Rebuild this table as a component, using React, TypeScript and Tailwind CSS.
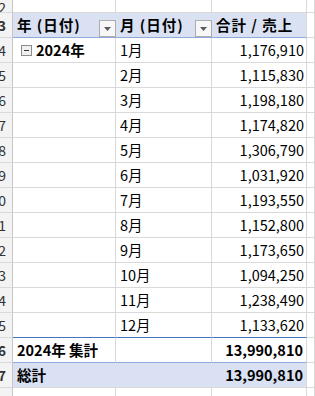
const MONTHS = [
  { n: 4, m: "1月", v: "1,176,910" },
  { n: 5, m: "2月", v: "1,115,830" },
  { n: 6, m: "3月", v: "1,198,180" },
  { n: 7, m: "4月", v: "1,174,820" },
  { n: 8, m: "5月", v: "1,306,790" },
  { n: 9, m: "6月", v: "1,031,920" },
  { n: 10, m: "7月", v: "1,193,550" },
  { n: 11, m: "8月", v: "1,152,800" },
  { n: 12, m: "9月", v: "1,173,650" },
  { n: 13, m: "10月", v: "1,094,250" },
  { n: 14, m: "11月", v: "1,238,490" },
  { n: 15, m: "12月", v: "1,133,620" },
];

function RowHead({ n }: { n: number }) {
  return (
    <div className="h-[25px] w-[13px] shrink-0 overflow-hidden bg-[#f3f3f3] border-r border-b border-r-[#c6c6c6] border-b-[#dadada] flex items-center justify-end pr-[6px] text-[14px] text-[#333] leading-none">
      {String(n).slice(-1)}
    </div>
  );
}

function DropBtn() {
  return (
    <div className="w-[17px] h-[17px] border border-[#acacac] bg-[#f7f7f7] flex items-center justify-center self-end">
      <svg width="7" height="4" viewBox="0 0 7 4">
        <path d="M0 0H7L3.5 4Z" fill="#5a5a5a" />
      </svg>
    </div>
  );
}

function MinusBox() {
  return (
    <div className="w-[11px] h-[11px] border border-[#8c8c8c] bg-[#f0f0f0] flex items-center justify-center mr-[4px]">
      <div className="w-[5px] h-[1px] bg-[#333]" />
    </div>
  );
}

export default function App() {
  const grid = "border-r border-b border-[#d9d9d9]";
  return (
    <div className="w-[315px] h-[396px] overflow-hidden bg-white font-['Noto_Sans_CJK_JP','Noto_Sans',sans-serif] text-[14.5px] text-black">
      {/* row 2 (partial) */}
      <div className="flex">
        <div className="h-[13px] w-[13px] shrink-0 overflow-hidden bg-[#f3f3f3] border-r border-b border-r-[#c6c6c6] border-b-[#dadada] flex items-end justify-end pr-[6px] text-[14px] text-[#333] leading-[10px]">
          2
        </div>
        <div className={`h-[13px] w-[103px] ${grid}`} />
        <div className={`h-[13px] w-[96px] ${grid}`} />
        <div className={`h-[13px] w-[95px] ${grid}`} />
        <div className={`h-[13px] flex-1 ${grid}`} />
      </div>

      {/* row 3 header */}
      <div className="flex font-bold">
        <RowHead n={3} />
        <div className="h-[25px] w-[103px] bg-[#d9e1f2] border-b border-[#8ea9db] flex items-center pl-[4px]">
          <span className="flex-1 tracking-[1px]">年 (日付)</span>
          <DropBtn />
        </div>
        <div className="h-[25px] w-[96px] bg-[#d9e1f2] border-b border-[#8ea9db] flex items-center pl-[4px]">
          <span className="flex-1 tracking-[1px]">月 (日付)</span>
          <DropBtn />
        </div>
        <div className="h-[25px] w-[95px] bg-[#d9e1f2] border-b border-b-[#8ea9db] border-r border-r-[#d9d9d9] flex items-center pl-[4px] tracking-[1px]">
          合計 / 売上
        </div>
        <div className={`h-[25px] flex-1 ${grid}`} />
      </div>

      {MONTHS.map((r, i) => {
        const last = i === MONTHS.length - 1;
        const b = last ? "border-r border-r-[#d9d9d9] border-b border-b-[#4472c4]" : grid;
        return (
          <div key={r.n} className="flex">
            <RowHead n={r.n} />
            <div className={`h-[25px] w-[103px] ${b} flex items-center pl-[8px] font-bold`}>
              {i === 0 && (
                <>
                  <MinusBox />
                  2024年
                </>
              )}
            </div>
            <div className={`h-[25px] w-[96px] ${b} flex items-center pl-[4px]`}>{r.m}</div>
            <div className={`h-[25px] w-[95px] ${b} flex items-center justify-end pr-[2px]`}>{r.v}</div>
            <div className={`h-[25px] flex-1 ${grid}`} />
          </div>
        );
      })}

      {/* row 16 subtotal */}
      <div className="flex font-bold">
        <RowHead n={16} />
        <div className="h-[25px] w-[103px] border-r border-r-[#d9d9d9] border-b border-b-[#8ea9db] flex items-center pl-[4px]">
          2024年 集計
        </div>
        <div className="h-[25px] w-[96px] border-r border-r-[#d9d9d9] border-b border-b-[#8ea9db]" />
        <div className="h-[25px] w-[95px] border-r border-r-[#d9d9d9] border-b border-b-[#8ea9db] flex items-center justify-end pr-[3px]">
          13,990,810
        </div>
        <div className={`h-[25px] flex-1 ${grid}`} />
      </div>

      {/* row 17 grand total */}
      <div className="flex font-bold">
        <RowHead n={17} />
        <div className="h-[25px] w-[294px] bg-[#d9e1f2] border-b border-r border-[#d9d9d9] flex items-center pl-[4px]">
          <span className="flex-1">総計</span>
          <span className="pr-[3px]">13,990,810</span>
        </div>
        <div className={`h-[25px] flex-1 ${grid}`} />
      </div>

      {/* row 18 */}
      <div className="flex">
        <RowHead n={18} />
        <div className={`h-[25px] w-[103px] ${grid}`} />
        <div className={`h-[25px] w-[96px] ${grid}`} />
        <div className={`h-[25px] w-[95px] ${grid}`} />
        <div className={`h-[25px] flex-1 ${grid}`} />
      </div>
    </div>
  );
}
